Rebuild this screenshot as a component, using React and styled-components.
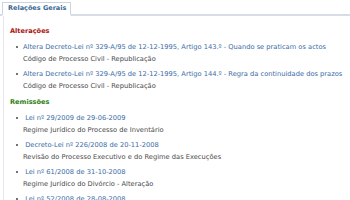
import React from "react";
import styled, { createGlobalStyle } from "styled-components";

const Global = createGlobalStyle`
  html, body { margin: 0; padding: 0; background: #fff; }
  body { font-family: "DejaVu Sans", Verdana, sans-serif; }
`;

const Page = styled.div`
  width: 350px;
  height: 200px;
  overflow: hidden;
  background: #fff;
`;

const TabBar = styled.div`
  display: flex;
  padding: 2px 0 0 2px;
  border-bottom: 2px solid #d5dee7;
`;

const Tab = styled.div`
  border: 1px solid #c9d5e1;
  padding: 0 4px 1px 5px;
  height: 10px;
  line-height: 10px;
  font-size: 6.5px;
  font-weight: bold;
  color: #3a6794;
  background: #fff;
  margin-bottom: -2px;
  border-bottom: 2px solid #fff;
`;

const Panel = styled.div`
  margin-left: 3px;
  border-left: 1px solid #e1e7ed;
  padding: 10px 0 0 6px;
  min-height: 200px;
`;

const Section = styled.div`
  margin-bottom: 6px;
`;

const Heading = styled.div`
  font-size: 6.6px;
  font-weight: bold;
  color: ${(p) => p.$color};
  line-height: 10px;
  margin-bottom: 6px;
`;

const List = styled.ul`
  list-style: none;
  margin: 0;
  padding: 0 0 0 13px;
`;

const Item = styled.li`
  position: relative;
  margin-bottom: ${(p) => p.$gap}px;
`;

const Bullet = styled.span`
  position: absolute;
  left: -7px;
  top: 4px;
  width: 2px;
  height: 2px;
  background: #444;
  border-radius: 50%;
`;

const Link = styled.a`
  display: block;
  font-size: 6.7px;
  line-height: 10px;
  color: #3a6ca6;
  text-decoration: none;
  white-space: pre;
`;

const Desc = styled.div`
  font-size: 6.7px;
  line-height: 10px;
  margin-top: 2px;
  color: #4a4a4a;
  white-space: nowrap;
`;

const alteracoes = [
  {
    link: "Altera Decreto-Lei nº 329-A/95 de 12-12-1995, Artigo 143.º - Quando se praticam os actos",
    desc: "Código de Processo Civil - Republicação",
  },
  {
    link: "Altera Decreto-Lei nº 329-A/95 de 12-12-1995, Artigo 144.º - Regra da continuidade dos prazos",
    desc: "Código de Processo Civil - Republicação",
  },
];

const remissoes = [
  { link: " Lei nº 29/2009 de 29-06-2009", desc: "Regime Jurídico do Processo de Inventário" },
  {
    link: " Decreto-Lei nº 226/2008 de 20-11-2008",
    desc: "Revisão do Processo Executivo e do Regime das Execuções",
  },
  { link: " Lei nº 61/2008 de 31-10-2008", desc: "Regime Jurídico do Divórcio - Alteração" },
  { link: " Lei nº 52/2008 de 28-08-2008", desc: "Lei de Organização e Funcionamento dos Tribunais Judiciais" },
];

export default function App() {
  return (
    <Page>
      <Global />
      <TabBar>
        <Tab>Relações Gerais</Tab>
      </TabBar>
      <Panel>
        <Section>
          <Heading $color="#a8160f">Alterações</Heading>
          <List>
            {alteracoes.map((it, i) => (
              <Item key={i} $gap={5}>
                <Bullet />
                <Link href="#">{it.link}</Link>
                <Desc>{it.desc}</Desc>
              </Item>
            ))}
          </List>
        </Section>
        <Section>
          <Heading $color="#2f8014">Remissões</Heading>
          <List>
            {remissoes.map((it, i) => (
              <Item key={i} $gap={5}>
                <Bullet />
                <Link href="#">{it.link}</Link>
                <Desc>{it.desc}</Desc>
              </Item>
            ))}
          </List>
        </Section>
      </Panel>
    </Page>
  );
}
